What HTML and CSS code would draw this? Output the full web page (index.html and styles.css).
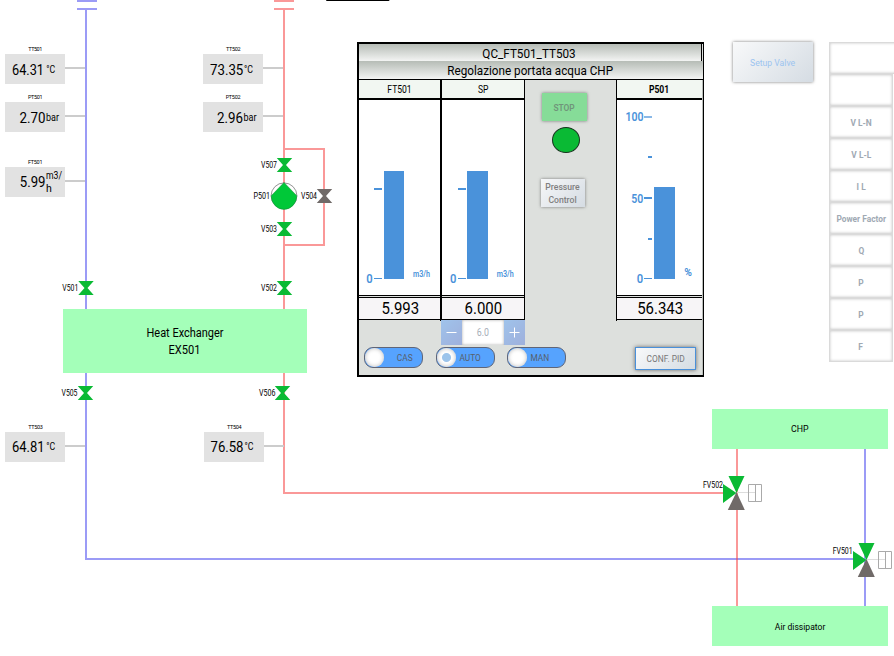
FILE: index.html
```html
<!DOCTYPE html>
<html lang="it">
<head>
<meta charset="utf-8">
<title>CHP water circuit</title>
<link rel="stylesheet" href="styles.css">
</head>
<body>
<main class="canvas">
<svg class="plant" width="894" height="656" viewBox="0 0 894 656">
  <defs>
    <path id="valve" d="M0 0H15.4L9.2 7L15.4 14H0L6.2 7Z"/>
    <g id="threeway">
      <path class="outline faint" d="M14 16.5H32"/>
      <path class="outline" d="M25.500 8.500H38.500V25.500H25.500ZM32.500 8.500V25.500" />
      <path class="on" d="M5.5 0H21.5L13.5 17L0 27V8L13.5 17Z"/>
      <path class="off" d="M13.5 16L21.8 34H4.8Z"/>
    </g>
  </defs>

  <g class="cold">
    <path d="M77 1H97M77 9H97M86 10V560M86 559H855M865 449V606"/>
  </g>
  <g class="hot">
    <path d="M274 1H294M274 9H294M284 10V493H724M737 449V606M284 149H324V245H284"/>
  </g>
  <rect x="326" y="-4" width="63.500" height="5" rx="1"/>
  <path class="taps" d="M65 68H85M65 116H85M65 181H85M263 68H283M263 116H283M65 446H85M264 446H284"/>

  <g class="box">
    <rect x="5" y="54" width="60" height="30"/><rect x="5" y="102" width="60" height="30"/>
    <rect x="5" y="167" width="60" height="30"/><rect x="203" y="54" width="60" height="30"/>
    <rect x="203" y="102" width="60" height="30"/><rect x="5" y="432" width="60" height="30"/>
    <rect x="204" y="432" width="60" height="30"/>
  </g>
  <g class="tiny">
    <text x="28.3" y="51" textLength="14">TT501</text><text x="28" y="99" textLength="14.5">PT501</text>
    <text x="28" y="164" textLength="14.5">FT501</text><text x="226" y="51" textLength="14.5">TT502</text>
    <text x="225.7" y="99" textLength="14.8">PT502</text><text x="28.3" y="429" textLength="14.5">TT503</text>
    <text x="227" y="429" textLength="14.5">TT504</text>
  </g>
  <g class="value">
    <text x="12" y="75" textLength="32" lengthAdjust="spacingAndGlyphs">64.31</text>
    <text x="19.5" y="123" textLength="26" lengthAdjust="spacingAndGlyphs">2.70</text>
    <text x="19.8" y="187" textLength="25.7" lengthAdjust="spacingAndGlyphs">5.99</text>
    <text x="210" y="75" textLength="33.3" lengthAdjust="spacingAndGlyphs">73.35</text>
    <text x="217" y="123" textLength="26" lengthAdjust="spacingAndGlyphs">2.96</text>
    <text x="12" y="452" textLength="32.5" lengthAdjust="spacingAndGlyphs">64.81</text>
    <text x="210.5" y="452" textLength="33" lengthAdjust="spacingAndGlyphs">76.58</text>
  </g>
  <g class="unit">
    <text x="46.3" y="73" textLength="9" lengthAdjust="spacingAndGlyphs">°C</text>
    <text x="46" y="121" textLength="13" lengthAdjust="spacingAndGlyphs">bar</text>
    <text x="46" y="179" textLength="16" lengthAdjust="spacingAndGlyphs">m3/</text>
    <text x="46" y="192" textLength="5.8" lengthAdjust="spacingAndGlyphs">h</text>
    <text x="244" y="73" textLength="9" lengthAdjust="spacingAndGlyphs">°C</text>
    <text x="243.5" y="121" textLength="13" lengthAdjust="spacingAndGlyphs">bar</text>
    <text x="46.3" y="450" textLength="9" lengthAdjust="spacingAndGlyphs">°C</text>
    <text x="244.5" y="450" textLength="9" lengthAdjust="spacingAndGlyphs">°C</text>
  </g>

  <g class="vessel">
    <rect x="63" y="309" width="244" height="64"/>
    <rect x="712" y="409" width="176" height="40"/>
    <rect x="712" y="606" width="176" height="40"/>
  </g>
  <g class="name">
    <text x="146.5" y="337" textLength="77" lengthAdjust="spacingAndGlyphs">Heat Exchanger</text>
    <text x="168.5" y="354" textLength="32" lengthAdjust="spacingAndGlyphs">EX501</text>
  </g>
  <g class="small-name">
    <text x="791" y="432" textLength="17.5" lengthAdjust="spacingAndGlyphs">CHP</text>
    <text x="774.8" y="630" textLength="50.5" lengthAdjust="spacingAndGlyphs">Air dissipator</text>
  </g>

  <g class="on">
    <use href="#valve" x="276.8" y="158"/><use href="#valve" x="276.8" y="222"/>
    <use href="#valve" x="78.3" y="281"/><use href="#valve" x="276.8" y="281"/>
    <use href="#valve" x="77.8" y="386"/><use href="#valve" x="274.8" y="386"/>
  </g>
  <use class="off" href="#valve" x="316.8" y="189"/>
  <circle class="pump" cx="284" cy="195.8" r="12.9"/>
  <path class="pump-on" d="M284 182.5L296.8 195.8A12.8 13.6 0 0 1 271.2 195.8Z"/>
  <use href="#threeway" x="723" y="476"/>
  <use href="#threeway" x="853" y="543"/>

  <g class="tag">
    <text x="261" y="168" textLength="16" lengthAdjust="spacingAndGlyphs">V507</text>
    <text x="253.5" y="199" textLength="16.5" lengthAdjust="spacingAndGlyphs">P501</text>
    <text x="301" y="199" textLength="16" lengthAdjust="spacingAndGlyphs">V504</text>
    <text x="261" y="232" textLength="16" lengthAdjust="spacingAndGlyphs">V503</text>
    <text x="62.3" y="291" textLength="16" lengthAdjust="spacingAndGlyphs">V501</text>
    <text x="261" y="291" textLength="16" lengthAdjust="spacingAndGlyphs">V502</text>
    <text x="61.5" y="396" textLength="16" lengthAdjust="spacingAndGlyphs">V505</text>
    <text x="259" y="396" textLength="16.5" lengthAdjust="spacingAndGlyphs">V506</text>
    <text x="703" y="488" textLength="20" lengthAdjust="spacingAndGlyphs">FV502</text>
    <text x="832.7" y="554" textLength="20" lengthAdjust="spacingAndGlyphs">FV501</text>
  </g>
</svg>

<section class="panel">
  <h1 class="title first"><span class="n">QC_FT501_TT503</span></h1>
  <h2 class="title"><span class="n">Regolazione portata acqua CHP</span></h2>
  <div class="body">
    <div class="column">
      <div class="head"><span class="n">FT501</span></div>
      <svg class="chart" width="81" height="195" viewBox="359 100 81 195">
        <path d="M384 171h20v108h-20zM374 188h8v2h-8zM374 278h8v1h-8z"/>
        <text class="scale" x="366.3" y="283" textLength="6.4" lengthAdjust="spacingAndGlyphs">0</text>
        <text class="eu" x="413" y="277" textLength="17" lengthAdjust="spacingAndGlyphs">m3/h</text>
      </svg>
      <div class="reading"><span class="n">5.993</span></div>
    </div>
    <div class="column second">
      <div class="head"><span class="n">SP</span></div>
      <svg class="chart" width="82" height="195" viewBox="442 100 82 195">
        <path d="M467 171h21v108h-21zM458 188h8v2h-8zM458 278h8v1h-8z"/>
        <text class="scale" x="450" y="283" textLength="6.4" lengthAdjust="spacingAndGlyphs">0</text>
        <text class="eu" x="496.7" y="277" textLength="17" lengthAdjust="spacingAndGlyphs">m3/h</text>
      </svg>
      <div class="reading"><span class="n">6.000</span></div>
    </div>
    <div class="controls">
      <button class="stop"><span class="n">STOP</span></button>
      <div class="lamp"></div>
      <button class="pressure"><span class="n">Pressure<br>Control</span></button>
    </div>
    <div class="column third">
      <div class="head strong"><span class="n">P501</span></div>
      <svg class="chart" width="85" height="195" viewBox="617 100 85 195">
        <path d="M654 187h21v92h-21zM644 197h8v2h-8zM644 278h8v1h-8zM648 156h4v2h-4zM648 238h4v2h-4z"/>
        <path opacity=".65" d="M644 116h8v2h-8z"/>
        <text class="scale" x="625.6" y="121" textLength="18" lengthAdjust="spacingAndGlyphs">100</text>
        <text class="scale" x="631.3" y="203" textLength="12" lengthAdjust="spacingAndGlyphs">50</text>
        <text class="scale" x="636.8" y="283" textLength="6.4" lengthAdjust="spacingAndGlyphs">0</text>
        <text class="pct" x="684.3" y="276" textLength="7.7" lengthAdjust="spacingAndGlyphs">%</text>
      </svg>
      <div class="reading"><span class="n">56.343</span></div>
    </div>
    <div class="edge"></div>
  </div>
  <div class="spinner">
    <button class="step"><svg width="21" height="25"><path d="M5.500 12.500H15.500"/></svg></button>
    <div class="field"><span class="n">6.0</span></div>
    <button class="step"><svg width="21" height="25"><path d="M5.500 12.500H15.500M10.500 7.500V17.500"/></svg></button>
  </div>
  <div class="modes">
    <div class="toggle cas"><i></i><span class="n">CAS</span></div>
    <div class="toggle auto"><i class="sel"></i><span class="n">AUTO</span></div>
    <div class="toggle man"><i></i><span class="n">MAN</span></div>
    <button class="conf"><span class="n">CONF. PID</span></button>
  </div>
</section>

<button class="setup"><span class="n">Setup Valve</span></button>
<ul class="meter">
  <li class="wide"></li><li></li>
  <li><span class="n">V L-N</span></li>
  <li><span class="n">V L-L</span></li>
  <li><span class="n">I L</span></li>
  <li><span class="n">Power Factor</span></li>
  <li><span class="n">Q</span></li>
  <li><span class="n">P</span></li>
  <li><span class="n">P</span></li>
  <li><span class="n">F</span></li>
</ul>
</main>
</body>
</html>
```
FILE: styles.css
```css
* { box-sizing: border-box; }
body { margin: 0; background: #fff; color: #000; font-family: Roboto, "Liberation Sans", sans-serif; }
.canvas { position: relative; width: 894px; height: 656px; overflow: hidden; }
.plant { display: block; }
button { margin: 0; padding: 0; border: 0; font-family: inherit; display: flex; align-items: center; justify-content: center; text-align: center; }
.n { display: inline-block; transform: scaleX(.88); white-space: nowrap; }

/* Plant diagram */
.cold path { fill: none; stroke: #4040ee; stroke-opacity: .52; stroke-width: 2; }
.hot path { fill: none; stroke: #f54040; stroke-opacity: .54; stroke-width: 2; }
.taps { stroke: #ccc; stroke-width: 2; }
.box rect { fill: #e2e2e2; }
.vessel rect { fill: #a4ffb9; }
.on { fill: #0aba34; }
.off { fill: #706a68; }
.outline { fill: none; stroke: #aaa; stroke-width: 1; }
.faint { stroke: #ddd; }
.pump { fill: #fff; stroke: #777; stroke-width: .8; }
.pump-on { fill: #00c838; stroke: #16883a; stroke-width: .5; }
.tiny { font-size: 5.500px; }
.value { font-size: 14.200px; }
.unit { font-size: 10.500px; font-weight: 430; }
.name { font-size: 12.500px; }
.small-name { font-size: 9.800px; font-weight: 430; }
.tag { font-size: 8.500px; font-weight: 430; }

/* Regulator panel */
.panel { position: absolute; left: 357px; top: 42px; width: 347px; height: 335px; border: 2px solid #000; border-right-width: 1px; background: #dde0dd; }
.title { margin: 0; height: 17px; width: 344px; font-weight: 430; font-size: 13.300px; line-height: 20px; text-align: center; background: linear-gradient(#b6bcb6, #f3f4f3); }
.title.first { width: 343px; border-right: 1px solid #000; padding-right: 2px; }
.title + .title { height: 18px; line-height: 19px; padding-right: 2px; }
.body { display: grid; grid-template-columns: 82px 84px 91px 86px 1px; height: 241px; border-top: 1px solid #000; }
.column { border-right: 1px solid #000; height: 241px; }
.second { border-left: 1px solid #000; }
.third { border-left: 1px solid #000; border-right: 0; }
.edge { background: #b9bdb9; height: 295px; }
.head { height: 20px; line-height: 20px; border-bottom: 2px solid #000; background: #f2f7f2; text-align: center; font-size: 10.200px; font-weight: 430; }
.head .n { transform: scaleX(.84); }
.strong { font-weight: 700; }
.chart { display: block; background: #fff; fill: #4a92da; }
.scale { font-size: 12px; font-weight: 600; }
.eu { font-size: 9px; font-weight: 600; }
.pct { font-size: 10px; font-weight: 700; }
.reading { border-top: 1px solid #000; border-bottom: 1px solid #000; height: 25px; padding: 1px 0 0 1px; line-height: 23px; font-size: 17px; text-align: center; background: #f7f5f7; box-shadow: inset 0 1px #dde0dd, inset 0 2px #000; }
.controls { display: flex; flex-direction: column; align-items: flex-start; padding: 13px 0 0 16px; }
.stop { width: 45px; height: 28px; margin-left: 1px; background: #86dc98; color: #70957a; font-size: 9.500px; font-weight: 600; box-shadow: 0 0 3px #777; }
.lamp { width: 28px; height: 26px; margin: 6px 0 0 11px; border: 1px solid #17351e; border-radius: 50%; background: #0aba34; }
.pressure { width: 44px; height: 28px; margin-top: 26px; background: linear-gradient(135deg, #f6f7f8, #d5dce3); color: #808080; font-size: 9.800px; line-height: 13px; font-weight: 500; box-shadow: 0 0 3px #777; }
.spinner { display: grid; grid-template-columns: 21px 42px 21px; height: 25px; margin-left: 82px; width: 84px; }
.step { background: linear-gradient(135deg, #9fc3eb, #9fb0dc); }
.step path { stroke: #fff; stroke-width: 1; fill: none; }
.field { background: #fff; box-shadow: inset 0 0 3px #aaa; color: #a6aeb8; font-size: 10px; line-height: 25px; text-align: center; }
.modes { display: flex; margin: 2px 0 0 5px; }
.toggle { width: 59px; height: 21px; flex: none; display: flex; align-items: center; border: 1px solid #5f6578; border-radius: 9px; background: #56a3fe; color: #56606c; font-size: 9.500px; }
.toggle i { flex: none; width: 19px; height: 19px; border-radius: 50%; background: #fff; box-shadow: inset 0 0 4px #bbb; }
.toggle .sel { background: radial-gradient(circle, #9cc4eb 0 4px, #fff 5px); }
.toggle span { flex: 1; text-align: center; }
.cas span { padding-left: 4px; }
.auto { margin-left: 13px; }
.auto span { padding-right: 11px; }
.man { margin-left: 12px; }
.man span { padding-right: 14px; }
.conf { width: 61px; height: 23px; margin-left: 69px; border: 1px solid #4a90d9; background: linear-gradient(135deg, #f8f9fa, #d5dce3); box-shadow: 0 0 4px #666; color: #777; font-size: 9.500px; }

/* Right side */
.setup { position: absolute; left: 733px; top: 42px; width: 80px; height: 40px; background: linear-gradient(135deg, #f8f9fa, #d5dce3); box-shadow: 0 0 3px #777; color: #9cc4f0; font-size: 9.800px; }
.meter { position: absolute; left: 829px; top: 42px; width: 64px; margin: 0; padding: 0; list-style: none; }
.meter li { height: 32px; display: flex; align-items: center; justify-content: center; border: 1px solid #dadada; background: #fff; box-shadow: inset 0 0 3px #c4c4c4; color: #a0a9b3; font-size: 9.500px; font-weight: 700; }
.meter .wide { width: 80px; }
```
